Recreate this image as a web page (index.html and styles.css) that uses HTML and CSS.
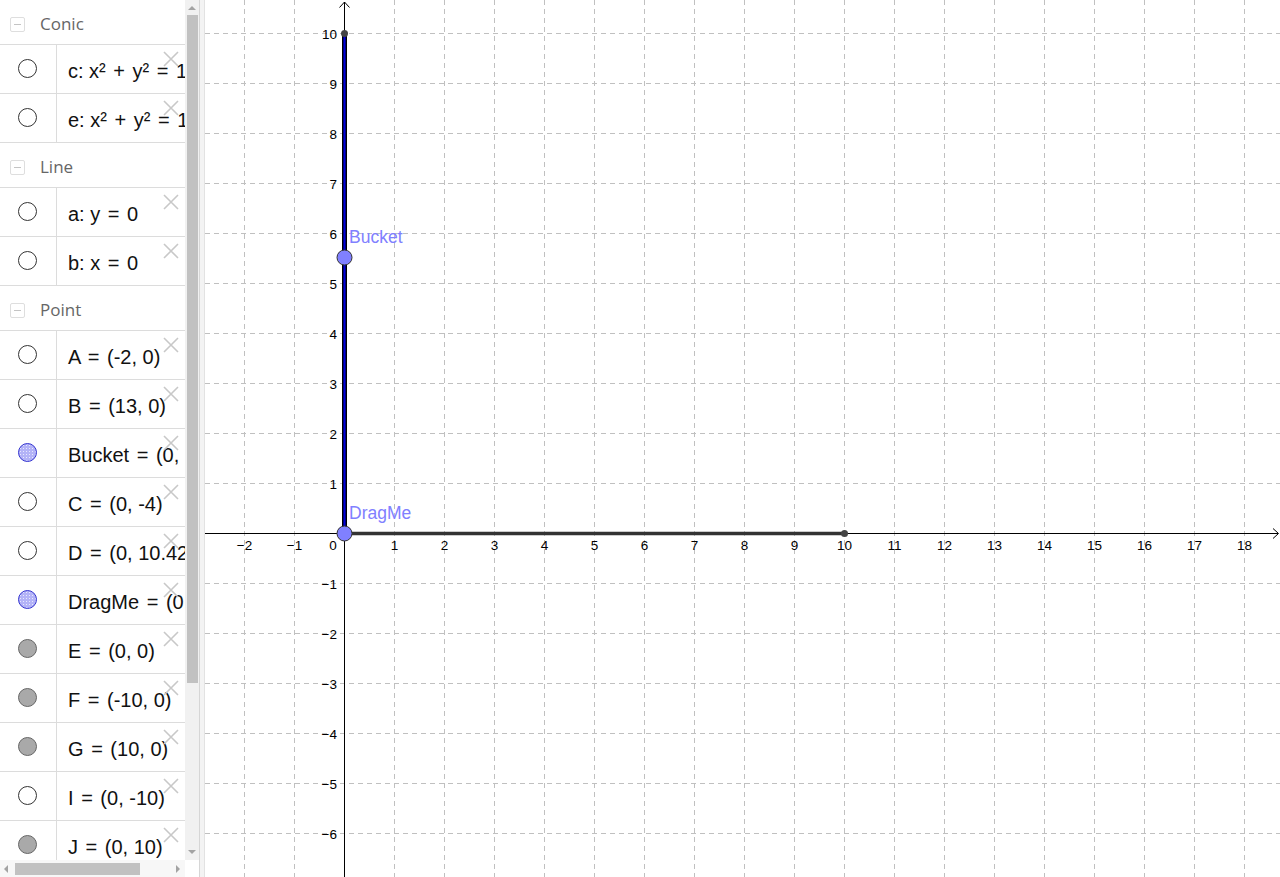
FILE: index.html
```html
<!DOCTYPE html>
<html>
<head>
<meta charset="utf-8">
<link rel="stylesheet" href="styles.css">
</head>
<body>
<div class="app">
  <div class="algebra">
    <div class="av-main">
      <div class="av-list">
        <div class="group"><span class="toggle"><span class="minus"></span></span><span class="gtitle">Conic</span></div>
        <div class="item"><div class="marble"><span class="dot"></span></div><div class="expr">c: x² <span class="op">+</span> y² <span class="op">=</span> 100</div><svg class="close" viewBox="0 0 16 16"><path d="M1 1L15 15M15 1L1 15"/></svg></div>
        <div class="item"><div class="marble"><span class="dot"></span></div><div class="expr">e: x² <span class="op">+</span> y² <span class="op">=</span> 100</div><svg class="close" viewBox="0 0 16 16"><path d="M1 1L15 15M15 1L1 15"/></svg></div>
        <div class="group"><span class="toggle"><span class="minus"></span></span><span class="gtitle">Line</span></div>
        <div class="item"><div class="marble"><span class="dot"></span></div><div class="expr">a: y <span class="op">=</span> 0</div><svg class="close" viewBox="0 0 16 16"><path d="M1 1L15 15M15 1L1 15"/></svg></div>
        <div class="item"><div class="marble"><span class="dot"></span></div><div class="expr">b: x <span class="op">=</span> 0</div><svg class="close" viewBox="0 0 16 16"><path d="M1 1L15 15M15 1L1 15"/></svg></div>
        <div class="group"><span class="toggle"><span class="minus"></span></span><span class="gtitle">Point</span></div>
        <div class="item"><div class="marble"><span class="dot"></span></div><div class="expr">A <span class="op">=</span> (-2, 0)</div><svg class="close" viewBox="0 0 16 16"><path d="M1 1L15 15M15 1L1 15"/></svg></div>
        <div class="item"><div class="marble"><span class="dot"></span></div><div class="expr">B <span class="op">=</span> (13, 0)</div><svg class="close" viewBox="0 0 16 16"><path d="M1 1L15 15M15 1L1 15"/></svg></div>
        <div class="item"><div class="marble"><span class="dot blue"></span></div><div class="expr">Bucket <span class="op">=</span> (0, 5.52)</div><svg class="close" viewBox="0 0 16 16"><path d="M1 1L15 15M15 1L1 15"/></svg></div>
        <div class="item"><div class="marble"><span class="dot"></span></div><div class="expr">C <span class="op">=</span> (0, -4)</div><svg class="close" viewBox="0 0 16 16"><path d="M1 1L15 15M15 1L1 15"/></svg></div>
        <div class="item"><div class="marble"><span class="dot"></span></div><div class="expr">D <span class="op">=</span> (0, 10.42)</div><svg class="close" viewBox="0 0 16 16"><path d="M1 1L15 15M15 1L1 15"/></svg></div>
        <div class="item"><div class="marble"><span class="dot blue"></span></div><div class="expr">DragMe <span class="op">=</span> (0, 0)</div><svg class="close" viewBox="0 0 16 16"><path d="M1 1L15 15M15 1L1 15"/></svg></div>
        <div class="item"><div class="marble"><span class="dot gray"></span></div><div class="expr">E <span class="op">=</span> (0, 0)</div><svg class="close" viewBox="0 0 16 16"><path d="M1 1L15 15M15 1L1 15"/></svg></div>
        <div class="item"><div class="marble"><span class="dot gray"></span></div><div class="expr">F <span class="op">=</span> (-10, 0)</div><svg class="close" viewBox="0 0 16 16"><path d="M1 1L15 15M15 1L1 15"/></svg></div>
        <div class="item"><div class="marble"><span class="dot gray"></span></div><div class="expr">G <span class="op">=</span> (10, 0)</div><svg class="close" viewBox="0 0 16 16"><path d="M1 1L15 15M15 1L1 15"/></svg></div>
        <div class="item"><div class="marble"><span class="dot"></span></div><div class="expr">I <span class="op">=</span> (0, -10)</div><svg class="close" viewBox="0 0 16 16"><path d="M1 1L15 15M15 1L1 15"/></svg></div>
        <div class="item"><div class="marble"><span class="dot gray"></span></div><div class="expr">J <span class="op">=</span> (0, 10)</div><svg class="close" viewBox="0 0 16 16"><path d="M1 1L15 15M15 1L1 15"/></svg></div>
      </div>
      <div class="vscroll">
        <span class="arrow-up"></span>
        <div class="vtrack"><div class="vthumb"></div></div>
        <span class="arrow-down"></span>
      </div>
    </div>
    <div class="hscroll-row">
      <div class="hscroll">
        <span class="arrow-left"></span>
        <div class="htrack"><div class="hthumb"></div></div>
        <span class="arrow-right"></span>
      </div>
      <div class="corner"></div>
    </div>
  </div>
  <div class="divider"></div>
  <div class="graph">
    <svg class="plot" width="1075" height="877" viewBox="0 0 1075 877">
      <g class="grid">
        <path d="M39.5 0V877M89.5 0V877M189.5 0V877M239.5 0V877M289.5 0V877M339.5 0V877M389.5 0V877M439.5 0V877M489.5 0V877M539.5 0V877M589.5 0V877M639.5 0V877M689.5 0V877M739.5 0V877M789.5 0V877M839.5 0V877M889.5 0V877M939.5 0V877M989.5 0V877M1039.5 0V877"/>
        <path d="M0 33.5H1075M0 83.5H1075M0 133.5H1075M0 183.5H1075M0 233.5H1075M0 283.5H1075M0 333.5H1075M0 383.5H1075M0 433.5H1075M0 483.5H1075M0 583.5H1075M0 633.5H1075M0 683.5H1075M0 733.5H1075M0 783.5H1075M0 833.5H1075"/>
      </g>
      <g class="axes">
        <path d="M0 533.5H1073M139.5 877V2"/>
        <path d="M1068 528.5L1073.5 533.5L1068 538.5M134.5 7.5L139.5 2L144.5 7.5"/>
      </g>
      <g class="xlabels">
        <text x="39.5" y="550">−2</text>
        <text x="89.5" y="550">−1</text>
        <text x="189.5" y="550">1</text>
        <text x="239.5" y="550">2</text>
        <text x="289.5" y="550">3</text>
        <text x="339.5" y="550">4</text>
        <text x="389.5" y="550">5</text>
        <text x="439.5" y="550">6</text>
        <text x="489.5" y="550">7</text>
        <text x="539.5" y="550">8</text>
        <text x="589.5" y="550">9</text>
        <text x="639.5" y="550">10</text>
        <text x="689.5" y="550">11</text>
        <text x="739.5" y="550">12</text>
        <text x="789.5" y="550">13</text>
        <text x="839.5" y="550">14</text>
        <text x="889.5" y="550">15</text>
        <text x="939.5" y="550">16</text>
        <text x="989.5" y="550">17</text>
        <text x="1039.5" y="550">18</text>
        <text x="128" y="550">0</text>
      </g>
      <g class="ylabels">
        <text x="132" y="38.5">10</text>
        <text x="132" y="88.5">9</text>
        <text x="132" y="138.5">8</text>
        <text x="132" y="188.5">7</text>
        <text x="132" y="238.5">6</text>
        <text x="132" y="288.5">5</text>
        <text x="132" y="338.5">4</text>
        <text x="132" y="388.5">3</text>
        <text x="132" y="438.5">2</text>
        <text x="132" y="488.5">1</text>
        <text x="132" y="588.5">−1</text>
        <text x="132" y="638.5">−2</text>
        <text x="132" y="688.5">−3</text>
        <text x="132" y="738.5">−4</text>
        <text x="132" y="788.5">−5</text>
        <text x="132" y="838.5">−6</text>
      </g>
      <path class="seg-h" d="M139.5 533.5H639.5"/>
      <path class="seg-v-outer" d="M139.5 533.5V33.5"/>
      <path class="seg-v-inner" d="M139.5 533.5V33.5"/>
      <circle class="small-pt" cx="639.5" cy="533.5" r="3.5"/>
      <circle class="small-pt" cx="139.5" cy="33.5" r="3.5"/>
      <circle class="big-pt" cx="139.5" cy="257.5" r="7.5"/>
      <circle class="big-pt" cx="139.5" cy="533.5" r="7.5"/>
      <text class="ptlabel" x="144" y="243">Bucket</text>
      <text class="ptlabel" x="144" y="519">DragMe</text>
    </svg>
  </div>
</div>
</body>
</html>
```
FILE: styles.css
```css
html, body {
  margin: 0;
  padding: 0;
  background: #fff;
  overflow: hidden;
}
.app {
  display: flex;
  width: 1280px;
  height: 877px;
}
.algebra {
  width: 199px;
  display: flex;
  flex-direction: column;
  background: #fff;
}
.av-main {
  display: flex;
  height: 860px;
}
.av-list {
  width: 185px;
  flex: none;
  overflow: hidden;
  display: flex;
  flex-direction: column;
}
.group {
  flex: none;
  height: 44px;
  border-top: 1px solid #dcdcdc;
  display: flex;
  align-items: flex-start;
}
.group:first-child {
  margin-top: -1px;
}
.toggle {
  width: 13px;
  height: 13px;
  border: 1px solid #dedede;
  border-radius: 2px;
  margin: 17px 0 0 10px;
  display: flex;
  align-items: center;
  justify-content: center;
}
.minus {
  width: 7px;
  height: 1px;
  background: #c4c4c4;
}
.gtitle {
  font-family: "Open Sans", "Noto Sans", sans-serif;
  font-size: 17px;
  line-height: 24px;
  color: #666;
  padding: 12px 0 0 15px;
}
.item {
  flex: none;
  position: relative;
  height: 48px;
  border-top: 1px solid #dcdcdc;
  display: flex;
}
.marble {
  flex: none;
  width: 56px;
  border-right: 1px solid #dcdcdc;
}
.dot {
  display: block;
  box-sizing: border-box;
  width: 19px;
  height: 19px;
  margin: 14px 0 0 18px;
  border-radius: 50%;
  border: 1px solid #333;
  background: #fff;
}
.dot.blue {
  border-color: #3535d0;
  background-color: #b3b3f7;
  background-image: radial-gradient(circle, rgba(255,255,255,0.7) 0.6px, transparent 0.9px);
  background-size: 3px 3px;
}
.dot.gray {
  border-color: #666;
  background: #a9a9a9;
}
.expr {
  font-family: "Liberation Sans", Arial, sans-serif;
  font-size: 20px;
  line-height: 24px;
  color: #111;
  white-space: nowrap;
  padding: 14px 0 0 11px;
}
.op {
  margin: 0 2px;
}
.close {
  position: absolute;
  left: 163px;
  top: 6px;
  width: 16px;
  height: 16px;
  fill: none;
  stroke: #c8c8c8;
  stroke-width: 1.6;
}
.vscroll {
  width: 14px;
  background: #f1f1f1;
  display: flex;
  flex-direction: column;
  align-items: center;
}
.arrow-up {
  margin-top: 6px;
  width: 0;
  height: 0;
  border-left: 4px solid transparent;
  border-right: 4px solid transparent;
  border-bottom: 4px solid #a3a3a3;
}
.vtrack {
  flex: 1;
  width: 100%;
  padding-top: 5px;
}
.vthumb {
  margin-left: 2px;
  width: 11px;
  height: 668px;
  background: #c1c1c1;
}
.arrow-down {
  margin-bottom: 6px;
  width: 0;
  height: 0;
  border-left: 4px solid transparent;
  border-right: 4px solid transparent;
  border-top: 4px solid #a3a3a3;
}
.hscroll-row {
  display: flex;
  height: 17px;
}
.hscroll {
  width: 185px;
  background: #f7f7f7;
  display: flex;
  align-items: center;
}
.arrow-left {
  margin-left: 4px;
  width: 0;
  height: 0;
  border-top: 4px solid transparent;
  border-bottom: 4px solid transparent;
  border-right: 4px solid #a3a3a3;
}
.htrack {
  flex: 1;
  height: 100%;
  display: flex;
  align-items: center;
}
.hthumb {
  margin-left: 7px;
  width: 125px;
  height: 12px;
  background: #c1c1c1;
}
.arrow-right {
  margin-right: 5px;
  width: 0;
  height: 0;
  border-top: 4px solid transparent;
  border-bottom: 4px solid transparent;
  border-left: 4px solid #a3a3a3;
}
.corner {
  width: 14px;
  background: #fff;
}
.divider {
  width: 4px;
  background: #f3f3f3;
  border-left: 1px solid #d6d6d6;
  border-right: 1px solid #e2e2e2;
}
.graph {
  flex: 1;
  overflow: hidden;
  background: #fff;
}
.plot {
  display: block;
}
.grid path {
  fill: none;
  stroke: #c0c0c0;
  stroke-width: 1;
  stroke-dasharray: 5 4;
  shape-rendering: crispEdges;
}
.axes path {
  fill: none;
  stroke: #000;
  stroke-width: 1;
}
.xlabels text, .ylabels text {
  font-family: "Liberation Sans", Arial, sans-serif;
  font-size: 13.5px;
  fill: #000;
}
.xlabels text {
  text-anchor: middle;
}
.ylabels text {
  text-anchor: end;
}
.seg-h {
  stroke: #333;
  stroke-width: 3.3;
  fill: none;
}
.seg-v-outer {
  stroke: #000;
  stroke-width: 5;
  fill: none;
}
.seg-v-inner {
  stroke: #0000dd;
  stroke-width: 2.2;
  fill: none;
}
.small-pt {
  fill: #444;
}
.big-pt {
  fill: #8080ff;
  stroke: #333;
  stroke-width: 1;
}
.ptlabel {
  font-family: "Liberation Sans", Arial, sans-serif;
  font-size: 17.5px;
  fill: #8080ff;
}
```
